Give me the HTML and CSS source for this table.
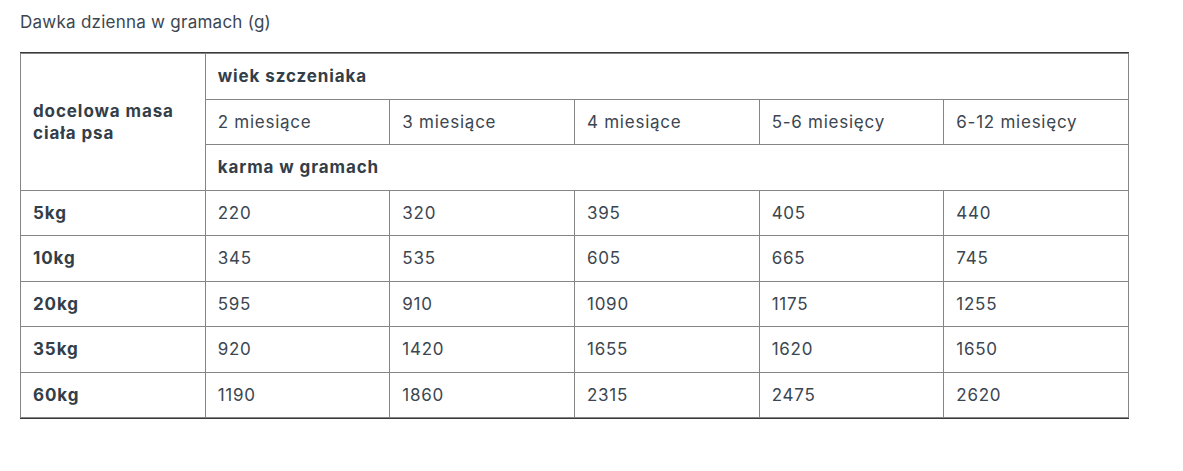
FILE: index.html
```html
<!DOCTYPE html>
<html lang="pl">
<head>
<meta charset="utf-8">
<link rel="stylesheet" href="styles.css">
</head>
<body>
<div class="page">
  <p class="title">Dawka dzienna w gramach (g)</p>
  <div class="frame">
    <table class="dose">
      <thead>
        <tr>
          <th class="corner" rowspan="3">docelowa masa<br>ciała psa</th>
          <th colspan="5">wiek szczeniaka</th>
        </tr>
        <tr>
          <td>2 miesiące</td>
          <td>3 miesiące</td>
          <td>4 miesiące</td>
          <td>5-6 miesięcy</td>
          <td>6-12 miesięcy</td>
        </tr>
        <tr>
          <th colspan="5">karma w gramach</th>
        </tr>
      </thead>
      <tbody>
        <tr><th>5kg</th><td>220</td><td>320</td><td>395</td><td>405</td><td>440</td></tr>
        <tr><th>10kg</th><td>345</td><td>535</td><td>605</td><td>665</td><td>745</td></tr>
        <tr><th>20kg</th><td>595</td><td>910</td><td>1090</td><td>1175</td><td>1255</td></tr>
        <tr><th>35kg</th><td>920</td><td>1420</td><td>1655</td><td>1620</td><td>1650</td></tr>
        <tr><th>60kg</th><td>1190</td><td>1860</td><td>2315</td><td>2475</td><td>2620</td></tr>
      </tbody>
    </table>
  </div>
</div>
</body>
</html>
```
FILE: styles.css
```css
html, body {
  margin: 0;
  padding: 0;
  background: #ffffff;
}

body {
  font-family: Inter, "Open Sans", sans-serif;
  color: #3b4651;
}

.page {
  padding: 10px 20px 0 20px;
}

.title {
  margin: 0 0 18px 0;
  font-size: 17px;
  letter-spacing: 0.25px;
  line-height: 24px;
  color: #3b4651;
}

.frame {
  width: 1109px;
  border-top: 1px solid #3a3a3a;
  border-bottom: 1px solid #3a3a3a;
}

.dose {
  width: 1109px;
  table-layout: fixed;
  border-collapse: collapse;
  font-size: 17px;
  letter-spacing: 0.75px;
}

.dose th,
.dose td {
  border: 1px solid #858585;
  padding: 10px 12px;
  height: 24.5px;
  line-height: 24px;
  text-align: left;
  vertical-align: middle;
}

.dose th {
  font-weight: 700;
  letter-spacing: 0.9px;
  color: #333e49;
}

.dose td {
  font-weight: 400;
}

.dose .corner {
  line-height: 22px;
}
```
